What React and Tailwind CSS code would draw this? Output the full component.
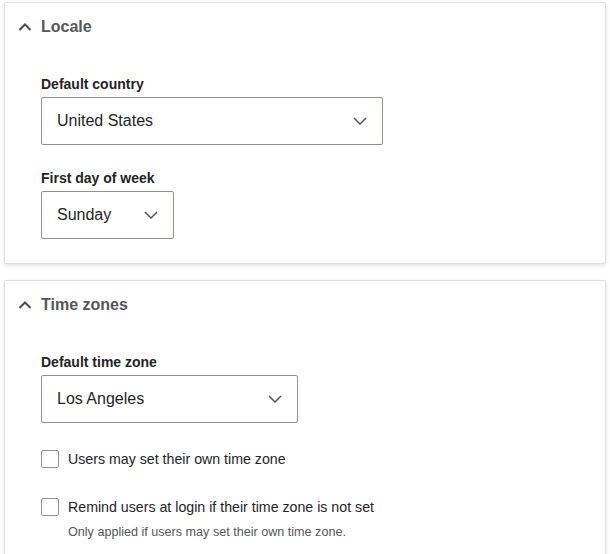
const font = { fontFamily: '"Liberation Sans", Arial, sans-serif' };

function ChevronUp() {
  return (
    <svg width="14" height="8" viewBox="0 0 14 8" fill="none" className="shrink-0">
      <path d="M1.5 7L7 1.5L12.5 7" stroke="#4b4c52" strokeWidth="2" />
    </svg>
  );
}

function ChevronDown() {
  return (
    <svg width="14" height="8" viewBox="0 0 14 8" fill="none" className="shrink-0">
      <path d="M1 1L7 7L13 1" stroke="#545560" strokeWidth="1.5" />
    </svg>
  );
}

function Select({ value, width }) {
  return (
    <div className={`flex h-[48px] items-center justify-between rounded-[2px] border border-[#8e929c] bg-white pl-[15px] pr-[15px] ${width}`}>
      <span className="text-[16px] leading-[20px] text-[#232429]">{value}</span>
      <ChevronDown />
    </div>
  );
}

function Field({ label, value, width, className = "" }) {
  return (
    <div className={className}>
      <div className="mb-[4px] text-[14px] font-bold leading-[18px] text-[#232429]">{label}</div>
      <Select value={value} width={width} />
    </div>
  );
}

function Checkbox({ label, desc, className = "" }) {
  return (
    <div className={className}>
      <div className="flex h-[20px] items-center">
        <span className="h-[18px] w-[18px] shrink-0 rounded-[2px] border border-[#8e929c] bg-white" />
        <span className="ml-[9px] text-[14.2px] leading-[20px] text-[#232429]">{label}</span>
      </div>
      {desc && <div className="ml-[27px] mt-[6px] text-[12.6px] leading-[18px] text-[#55565b]">{desc}</div>}
    </div>
  );
}

function Card({ title, children }) {
  return (
    <div className="rounded-[2px] border border-[#dedfe4] bg-white shadow-[0_2px_4px_rgba(0,0,0,0.1)]">
      <div className="flex items-center pl-[13px] pt-[16px] pb-[14px]">
        <ChevronUp />
        <span className="ml-[9px] text-[16px] font-bold leading-[16px] text-[#55565b]">{title}</span>
      </div>
      <div className="px-[36px] pt-[26px] pb-[24px]">{children}</div>
    </div>
  );
}

export default function App() {
  return (
    <div className="min-h-screen bg-white pt-[2px] pl-[4px] pr-[4px]" style={font}>
      <Card title="Locale">
        <Field label="Default country" value="United States" width="w-[342px]" />
        <Field label="First day of week" value="Sunday" width="w-[133px]" className="mt-[24px]" />
      </Card>
      <div className="mt-[16px]">
        <Card title="Time zones">
          <Field label="Default time zone" value="Los Angeles" width="w-[257px]" />
          <Checkbox label="Users may set their own time zone" className="mt-[26px]" />
          <Checkbox
            label="Remind users at login if their time zone is not set"
            desc="Only applied if users may set their own time zone."
            className="mt-[28px]"
          />
        </Card>
      </div>
    </div>
  );
}
